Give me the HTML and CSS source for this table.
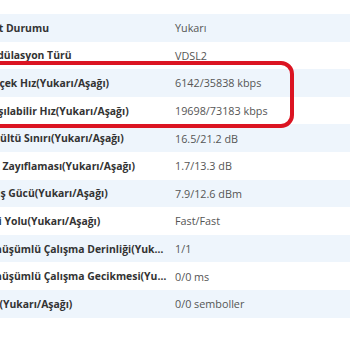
FILE: index.html
```html
<!DOCTYPE html>
<html lang="tr">
<head>
    <meta charset="UTF-8">
    <meta name="viewport" content="width=device-width, initial-scale=1.0">
    <title>DSL Bilgileri</title>
    <link rel="stylesheet" href="styles.css">
</head>
<body>
    <div class="info-table">
        <div class="row"><div class="label">Port Durumu</div><div class="value">Yukarı</div></div>
        <div class="row"><div class="label">Modülasyon Türü</div><div class="value">VDSL2</div></div>
        <div class="row"><div class="label">Gerçek Hız(Yukarı/Aşağı)</div><div class="value">6142/35838 kbps</div></div>
        <div class="row"><div class="label">Ulaşılabilir Hız(Yukarı/Aşağı)</div><div class="value">19698/73183 kbps</div></div>
        <div class="row"><div class="label">Gürültü Sınırı(Yukarı/Aşağı)</div><div class="value">16.5/21.2 dB</div></div>
        <div class="row"><div class="label">Hat Zayıflaması(Yukarı/Aşağı)</div><div class="value">1.7/13.3 dB</div></div>
        <div class="row"><div class="label">Çıkış Gücü(Yukarı/Aşağı)</div><div class="value">7.9/12.6 dBm</div></div>
        <div class="row"><div class="label">Veri Yolu(Yukarı/Aşağı)</div><div class="value">Fast/Fast</div></div>
        <div class="row"><div class="label">Dönüşümlü Çalışma Derinliği(Yukarı/Aşağı)</div><div class="value">1/1</div></div>
        <div class="row"><div class="label">Dönüşümlü Çalışma Gecikmesi(Yukarı/Aşağı)</div><div class="value">0/0 ms</div></div>
        <div class="row"><div class="label">INP(Yukarı/Aşağı)</div><div class="value">0/0 semboller</div></div>

        <!-- highlight around the rate rows -->
        <div class="highlight"></div>
    </div>
</body>
</html>
```

FILE: styles.css
```css
body {
    margin: 0;
    font-family: "Open Sans", "Noto Sans", sans-serif;
    font-size: 11px;
    background: #fff;
    overflow: hidden;
}

.info-table {
    position: relative;
    margin: 14px 0 0 -30px;
    width: 400px;
}

.row {
    display: grid;
    grid-template-columns: 205px 1fr;
    height: 27.6px;
    align-items: center;
}

.row:nth-child(odd) {
    background-color: #eef5fc;
}

.label {
    padding: 0 7px 0 11px;
    font-size: 10.4px;
    font-weight: bold;
    color: #333;
    white-space: nowrap;
    overflow: hidden;
    text-overflow: ellipsis;
}

.value {
    font-size: 10.8px;
    color: #555;
    white-space: nowrap;
}

.highlight {
    position: absolute;
    left: 0;
    top: 47px;
    width: 324px;
    height: 67px;
    box-sizing: border-box;
    border: 4px solid #db1422;
    border-radius: 13px;
}
```
